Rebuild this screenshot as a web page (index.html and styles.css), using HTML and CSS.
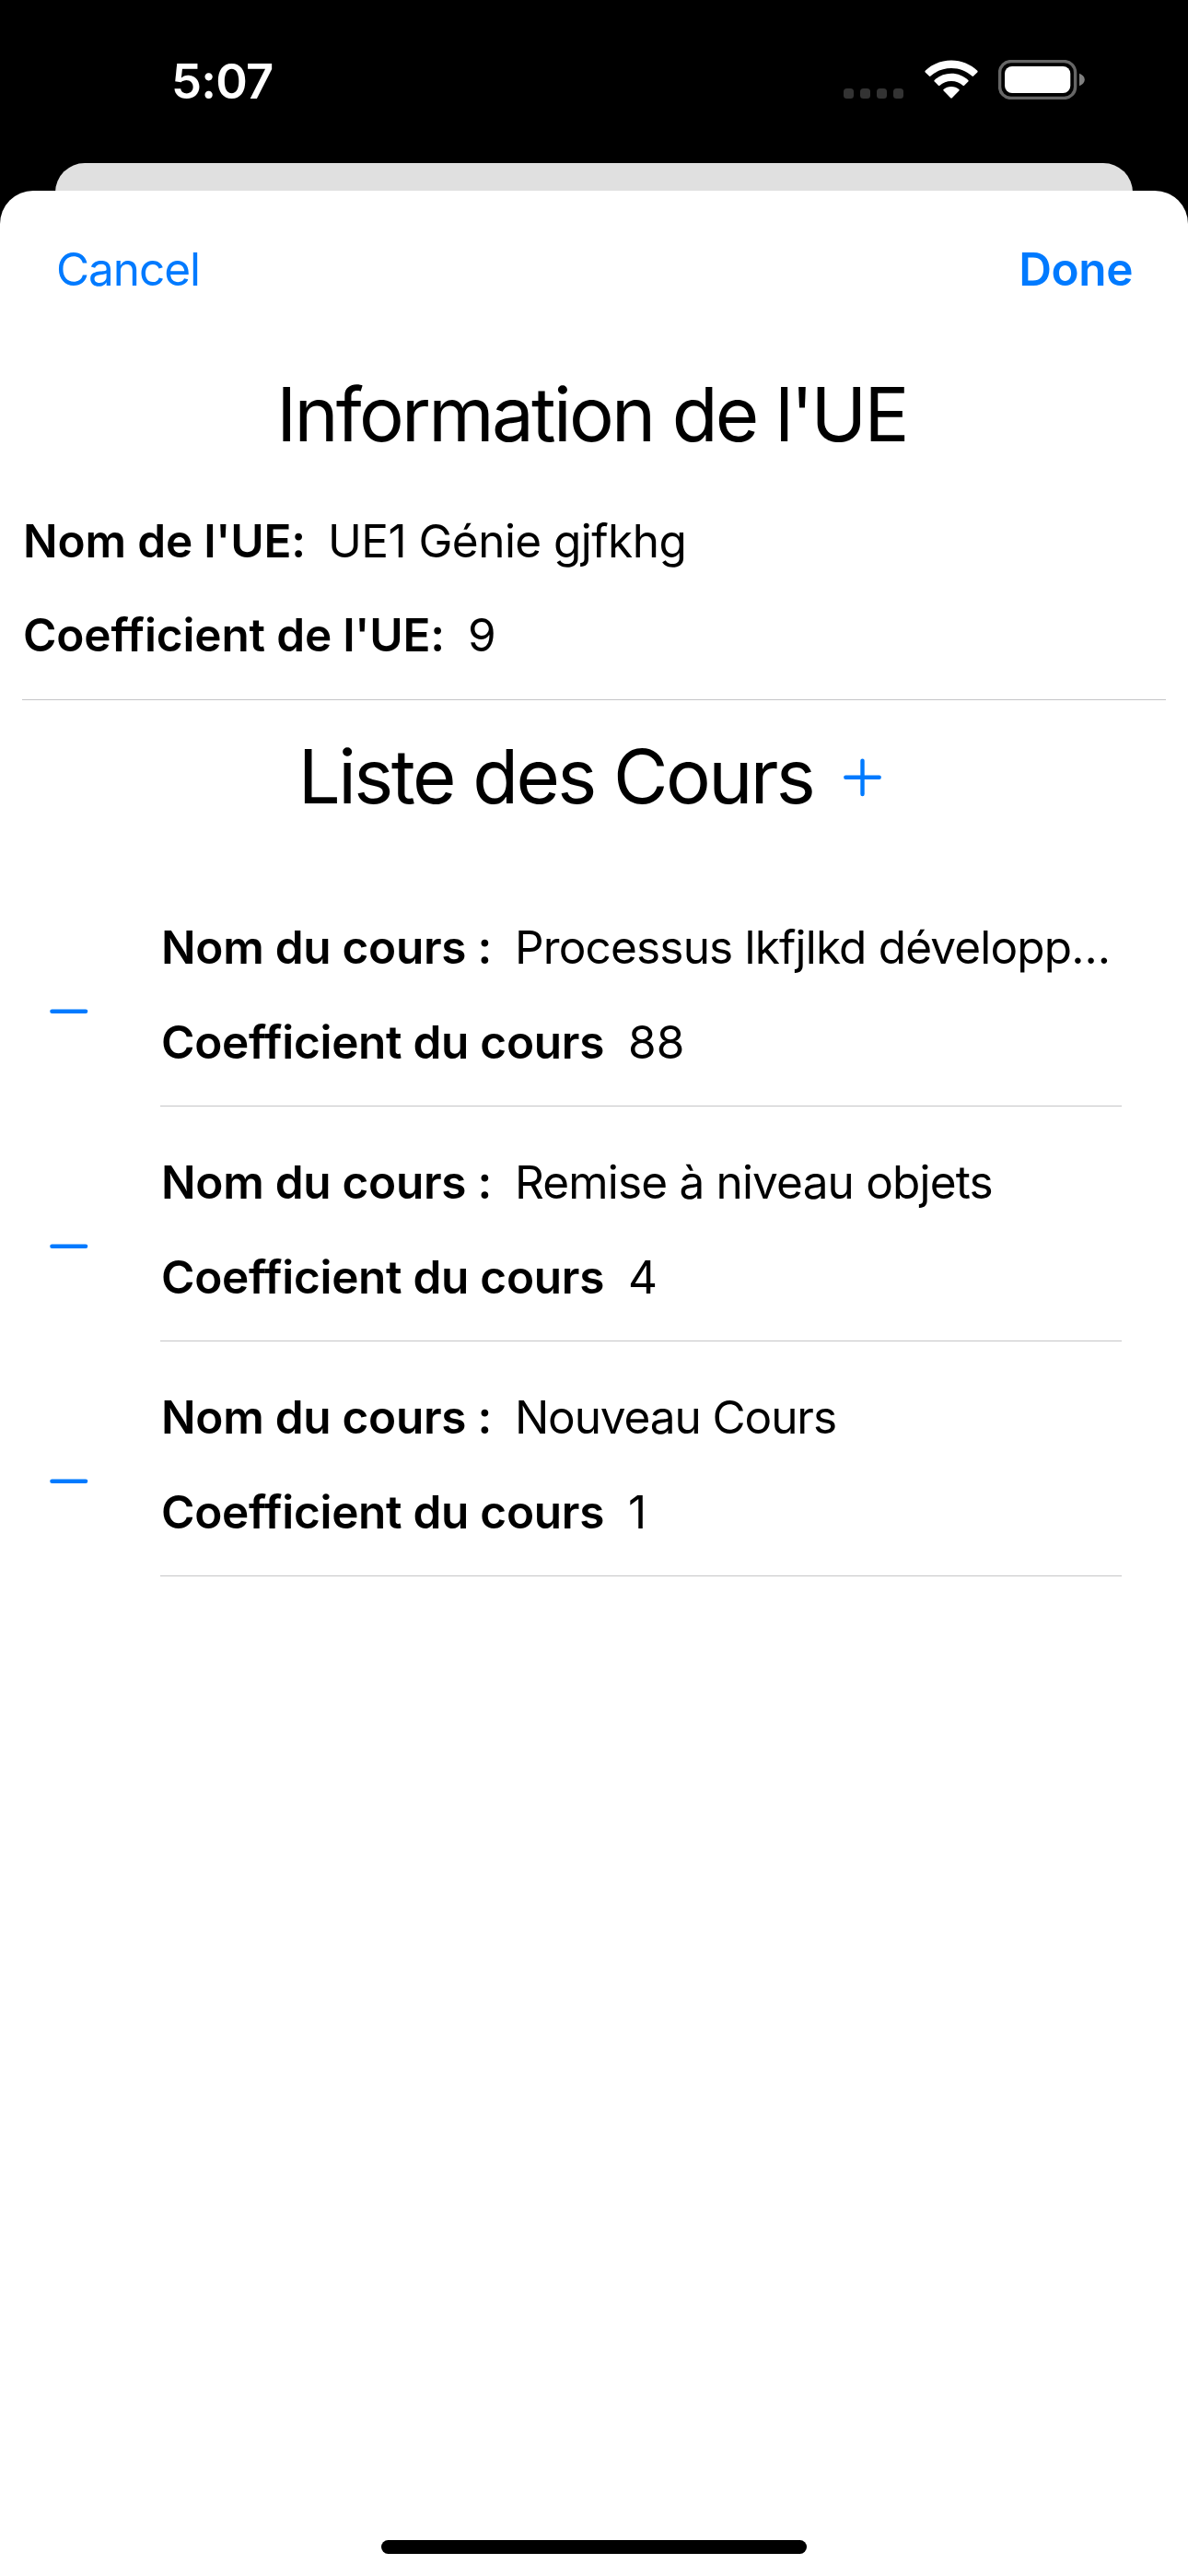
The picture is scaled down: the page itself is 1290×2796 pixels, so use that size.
FILE: index.html
```html
<!DOCTYPE html>
<html lang="fr">
<head>
<meta charset="utf-8">
<title>Information de l'UE</title>
<link rel="stylesheet" href="styles.css">
</head>
<body>
<div class="screen">
  <header class="status">
    <span class="time">5:07</span>
    <div class="indicators">
      <div class="cell"><i></i><i></i><i></i><i></i></div>
      <svg class="wifi" width="58" height="43" viewBox="0 0 58 43" fill="#fff">
        <path d="M29 0.5C40 0.5 50 4.8 57.3 11.8Q58 12.6 57.3 13.4L53.1 17.6Q52.3 18.3 51.5 17.6C45.5 12 37.6 8.9 29 8.9S12.5 12 6.5 17.6Q5.7 18.3 4.9 17.6L0.7 13.4Q0 12.6 0.7 11.8C8 4.8 18 0.5 29 0.5Z"/>
        <path d="M29 14.7C36 14.7 42.5 17.4 47.3 21.9Q48.1 22.7 47.3 23.5L43.1 27.7Q42.3 28.4 41.5 27.7C38.2 24.8 33.8 23 29 23S19.8 24.8 16.5 27.7Q15.7 28.4 14.9 27.7L10.7 23.5Q9.9 22.7 10.7 21.9C15.5 17.4 22 14.7 29 14.7Z"/>
        <path d="M29 29C32.3 29 35.1 30.1 37.4 32Q38.2 32.8 37.4 33.6L29.8 41.3Q29 42 28.2 41.3L20.6 33.6Q19.8 32.8 20.6 32C22.9 30.1 25.7 29 29 29Z"/>
      </svg>
      <svg class="battery" width="94" height="43" viewBox="0 0 94 43">
        <rect x="1.6" y="1.6" width="82" height="39.8" rx="12" fill="none" stroke="#666" stroke-width="3.4"/>
        <rect x="7" y="7" width="71.3" height="29" rx="8" fill="#fff"/>
        <path d="M88 14.8C91.5 16.2 93.8 18.5 93.8 21.5S91.5 26.8 88 28.2Z" fill="#808080"/>
      </svg>
    </div>
  </header>
  <div class="backdrop"></div>
  <main class="sheet">
    <nav class="bar">
      <span class="cancel">Cancel</span>
      <span class="done">Done</span>
    </nav>
    <h1 class="title">Information de l'UE</h1>
    <section class="info">
      <div class="row"><b>Nom de l'UE:</b><span>UE1 Génie gjfkhg</span></div>
      <div class="row wide"><b>Coefficient de l'UE:</b><span>9</span></div>
    </section>
    <div class="list-head">
      <h2 class="title">Liste des Cours</h2>
      <svg width="42" height="44" viewBox="0 0 42 44" stroke="#007aff" stroke-width="4.4" stroke-linecap="round"><path d="M2.3 22.8H38.7M20.5 4.6V41"/></svg>
    </div>
    <ul class="courses">
      <li>
        <svg class="minus" width="42" height="6" viewBox="0 0 42 6" stroke="#007aff" stroke-width="4.6" stroke-linecap="round"><path d="M2.5 2.8H39"/></svg>
        <div class="course">
          <div class="row"><b>Nom du cours :</b><span>Processus lkfjlkd développ…</span></div>
          <div class="row coef"><b>Coefficient du cours</b><span>88</span></div>
        </div>
      </li>
      <li>
        <svg class="minus" width="42" height="6" viewBox="0 0 42 6" stroke="#007aff" stroke-width="4.6" stroke-linecap="round"><path d="M2.5 2.8H39"/></svg>
        <div class="course">
          <div class="row"><b>Nom du cours :</b><span>Remise à niveau objets</span></div>
          <div class="row coef"><b>Coefficient du cours</b><span>4</span></div>
        </div>
      </li>
      <li>
        <svg class="minus" width="42" height="6" viewBox="0 0 42 6" stroke="#007aff" stroke-width="4.6" stroke-linecap="round"><path d="M2.5 2.8H39"/></svg>
        <div class="course">
          <div class="row"><b>Nom du cours :</b><span class="tight">Nouveau Cours</span></div>
          <div class="row coef"><b>Coefficient du cours</b><span>1</span></div>
        </div>
      </li>
    </ul>
    <div class="home"></div>
  </main>
</div>
</body>
</html>
```
FILE: styles.css
```css
* { box-sizing: border-box; }

body {
  margin: 0;
  background: #000;
  color: #000;
  font-family: Inter, "Liberation Sans", sans-serif;
  font-size: 49.5px;
  line-height: 60px;
}

h1, h2, ul { margin: 0; padding: 0; }
svg { display: block; flex: none; }

.screen {
  display: flex;
  flex-direction: column;
  width: 1290px;
  height: 2796px;
  overflow: hidden;
}

.status {
  display: flex;
  justify-content: space-between;
  height: 177px;
  padding: 58px 112px 0 186px;
}

.time {
  color: #fff;
  font-size: 52.5px;
  font-weight: 600;
  letter-spacing: -0.8px;
}

.indicators {
  display: flex;
  height: 50px;
  padding-top: 7px;
}

.cell {
  display: flex;
  align-items: flex-end;
  gap: 7px;
  height: 42px;
  margin-right: 23px;
}

.cell i {
  width: 11px;
  height: 11px;
  border-radius: 3.5px;
  background: #333;
}

.wifi { margin-right: 22px; }

.backdrop {
  flex: none;
  height: 90px;
  margin: 0 60px -60px;
  border-radius: 32px 32px 0 0;
  background: #e0e0e0;
}

.sheet {
  display: flex;
  flex: 1;
  flex-direction: column;
  border-radius: 36px 36px 0 0;
  background: #fff;
}

.bar {
  display: flex;
  justify-content: space-between;
  padding: 55px 60px 0 61px;
  color: #007aff;
}

.cancel { letter-spacing: -1.05px; }

.done {
  font-weight: 600;
  letter-spacing: -0.4px;
}

.title {
  font-size: 81.5px;
  font-weight: 400;
  letter-spacing: -2.73px;
  line-height: 100px;
}

h1.title {
  margin-top: 78px;
  padding-right: 5px;
  text-align: center;
}

.info {
  display: flex;
  flex-direction: column;
  gap: 42px;
  margin: 57px 24px 0;
  padding-bottom: 40px;
  border-bottom: 1px solid #c5c5c7;
}

.row {
  display: flex;
  gap: 25px;
  padding-left: 1px;
  letter-spacing: -0.82px;
  white-space: pre;
}

.row b {
  font-weight: 600;
  letter-spacing: -0.28px;
}

.info .row { gap: 24px; letter-spacing: -0.54px; }
.info .row.wide { gap: 25px; }
.info .row b { letter-spacing: -0.14px; }
.row .tight { letter-spacing: -1.1px; }
.row.coef { gap: 26px; letter-spacing: 0; }

.list-head {
  display: flex;
  align-items: center;
  justify-content: center;
  gap: 33px;
  margin-top: 33px;
  padding-right: 8px;
}

.list-head .title { letter-spacing: -2.63px; }

.courses {
  margin-top: 53px;
  list-style: none;
}

.courses li {
  display: flex;
  height: 255px;
  padding: 0 72px 0 54px;
}

.minus { margin: 149px 78px 0 0; }

.course {
  display: flex;
  flex: 1;
  flex-direction: column;
  gap: 43px;
  min-width: 0;
  padding-top: 52px;
  border-bottom: 1px solid #c5c5c7;
}

.home {
  width: 462px;
  height: 15px;
  margin: auto auto 24px;
  border-radius: 8px;
  background: #000;
}
```
